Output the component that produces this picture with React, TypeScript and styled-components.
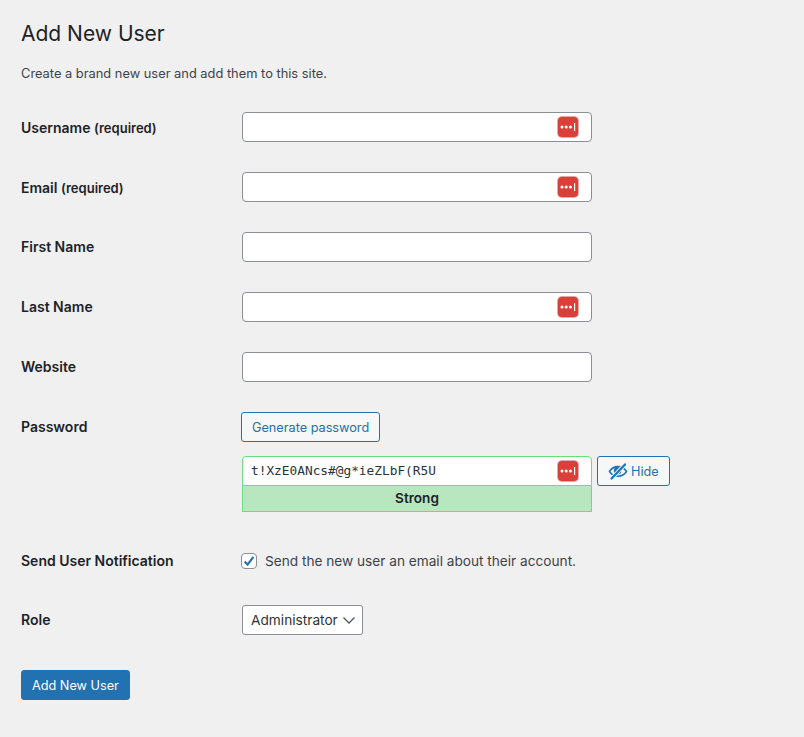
import styled, { createGlobalStyle } from "styled-components";
import { ReactNode } from "react";

const GlobalStyle = createGlobalStyle`
  html, body {
    margin: 0;
    padding: 0;
    background: #f0f0f1;
    color: #1d2327;
    font-family: Inter, "Liberation Sans", sans-serif;
    font-size: 13px;
  }
  * { box-sizing: border-box; }
`;

const Page = styled.div`
  width: 804px;
  height: 737px;
  padding: 21px 0 0 21px;
  overflow: hidden;
`;

const Title = styled.h1`
  margin: 0;
  font-size: 21px;
  line-height: 25px;
  font-weight: 400;
`;

const Intro = styled.p`
  margin: 19px 0 0;
  font-size: 12.85px;
  line-height: 18px;
  color: #3c434a;
`;

const Form = styled.div`
  margin-top: 29px;
`;

const Row = styled.div<{ $gap?: number }>`
  display: grid;
  grid-template-columns: 221px 1fr;
  margin-bottom: ${(p) => p.$gap ?? 30}px;
`;

const Label = styled.div<{ $lh?: number }>`
  font-size: 14px;
  font-weight: 600;
  line-height: ${(p) => p.$lh ?? 30}px;
  height: 30px;
  color: #1d2327;
`;

const Small = styled.span`
  font-size: 13px;
`;

const InputBox = styled.div<{ $ok?: boolean }>`
  position: relative;
  width: 350px;
  height: 30px;
  background: #fff;
  border: 1px solid ${(p) => (p.$ok ? "#68de7c" : "#8c8f94")};
  border-radius: ${(p) => (p.$ok ? "4px 4px 0 0" : "4px")};
  padding: 0 8px;
  line-height: 26px;
`;

const Mono = styled.span`
  font-family: "DejaVu Sans Mono", "Liberation Mono", monospace;
  font-size: 12.8px;
  color: #2c3338;
`;

const KeyBadge = styled.span`
  position: absolute;
  right: 13px;
  top: 4px;
  width: 20px;
  height: 20px;
  border-radius: 4px;
  background: #d9403c;
  box-shadow: 0 0 0 1px #eda5a3;
  display: flex;
  align-items: center;
  justify-content: center;
`;

const OutlineButton = styled.button`
  display: inline-flex;
  align-items: center;
  height: 30px;
  padding: 0 10px;
  background: #f6f7f7;
  border: 1px solid #2271b1;
  border-radius: 3px;
  color: #2271b1;
  font-family: inherit;
  font-size: 12.7px;
`;

const GenerateButton = styled(OutlineButton)`
  margin-left: -1px;
`;

const PasswordLine = styled.div`
  display: flex;
  gap: 5px;
  margin-top: 14px;
`;

const Strength = styled.div`
  width: 350px;
  height: 26px;
  background: #b8e6bf;
  border: 1px solid #68de7c;
  border-top: none;
  text-align: center;
  font-size: 13.6px;
  font-weight: 600;
  line-height: 25px;
  color: #1d2327;
`;

const CheckLine = styled.div`
  display: flex;
  align-items: center;
  gap: 8px;
  height: 30px;
  margin-left: -1px;
  font-size: 13.65px;
  color: #3c434a;
`;

const CheckBox = styled.span`
  width: 16px;
  height: 16px;
  background: #fff;
  border: 1px solid #8c8f94;
  border-radius: 4px;
  display: flex;
  align-items: center;
  justify-content: center;
`;

const SelectBox = styled.div`
  display: inline-flex;
  align-items: center;
  gap: 4px;
  height: 30px;
  padding: 0 6px 0 8px;
  background: #fff;
  border: 1px solid #8c8f94;
  border-radius: 3px;
  font-size: 13.7px;
  color: #2c3338;
`;

const PrimaryButton = styled.button`
  height: 30px;
  padding: 0 10px;
  margin-top: 5px;
  background: #2271b1;
  border: 1px solid #2271b1;
  border-radius: 3px;
  color: #fff;
  font-family: inherit;
  font-size: 12.7px;
`;

const KeyIcon = () => (
  <svg width="16" height="8" viewBox="0 0 16 8">
    <circle cx="2" cy="4" r="1.5" fill="#fff" />
    <circle cx="6.2" cy="4" r="1.5" fill="#fff" />
    <circle cx="10.4" cy="4" r="1.5" fill="#fff" />
    <rect x="14" y="0" width="1.2" height="8" fill="#fff" />
  </svg>
);

const HiddenIcon = () => (
  <svg width="20" height="20" viewBox="0 0 20 20" style={{ marginRight: 3 }}>
    <path
      d="M1.5 10.5C3.5 7.2 6.5 5.6 10 5.6S16.5 7.2 18.5 10.5C16.5 13.6 13.5 15.2 10 15.2S3.5 13.6 1.5 10.5z"
      fill="none"
      stroke="#2271b1"
      strokeWidth="1.6"
    />
    <circle cx="9.6" cy="9.8" r="3.8" fill="#2271b1" />
    <path d="M3.6 17.6L17 3.4" stroke="#f6f7f7" strokeWidth="4" />
    <path d="M3.6 17.6L17 3.4" stroke="#2271b1" strokeWidth="2.2" strokeLinecap="round" />
  </svg>
);

const TextField = ({ keyed, ok, children }: { keyed?: boolean; ok?: boolean; children?: ReactNode }) => (
  <InputBox $ok={ok}>
    {children}
    {keyed && (
      <KeyBadge>
        <KeyIcon />
      </KeyBadge>
    )}
  </InputBox>
);

export default function App() {
  return (
    <Page>
      <GlobalStyle />
      <Title>Add New User</Title>
      <Intro>Create a brand new user and add them to this site.</Intro>
      <Form>
        <Row>
          <Label $lh={32}>
            Username <Small>(required)</Small>
          </Label>
          <TextField keyed />
        </Row>
        <Row>
          <Label $lh={32}>
            Email <Small>(required)</Small>
          </Label>
          <TextField keyed />
        </Row>
        <Row>
          <Label>First Name</Label>
          <TextField />
        </Row>
        <Row>
          <Label>Last Name</Label>
          <TextField keyed />
        </Row>
        <Row>
          <Label>Website</Label>
          <TextField />
        </Row>
        <Row $gap={34}>
          <Label>Password</Label>
          <div>
            <GenerateButton>Generate password</GenerateButton>
            <PasswordLine>
              <TextField keyed ok>
                <Mono>t!XzE0ANcs#@g*ieZLbF(R5U</Mono>
              </TextField>
              <OutlineButton>
                <HiddenIcon />
                Hide
              </OutlineButton>
            </PasswordLine>
            <Strength>Strong</Strength>
          </div>
        </Row>
        <Row $gap={29}>
          <Label>Send User Notification</Label>
          <CheckLine>
            <CheckBox>
              <svg width="14" height="14" viewBox="0 0 14 14">
                <path d="M2.6 7.4L5.6 10.6L11.4 2.8" fill="none" stroke="#2271b1" strokeWidth="2.2" />
              </svg>
            </CheckBox>
            Send the new user an email about their account.
          </CheckLine>
        </Row>
        <Row>
          <Label>Role</Label>
          <div>
            <SelectBox>
              Administrator
              <svg width="14" height="14" viewBox="0 0 14 14">
                <path d="M1.5 4.5L7 10L12.5 4.5" fill="none" stroke="#50575e" strokeWidth="1.3" />
              </svg>
            </SelectBox>
          </div>
        </Row>
        <PrimaryButton>Add New User</PrimaryButton>
      </Form>
    </Page>
  );
}
